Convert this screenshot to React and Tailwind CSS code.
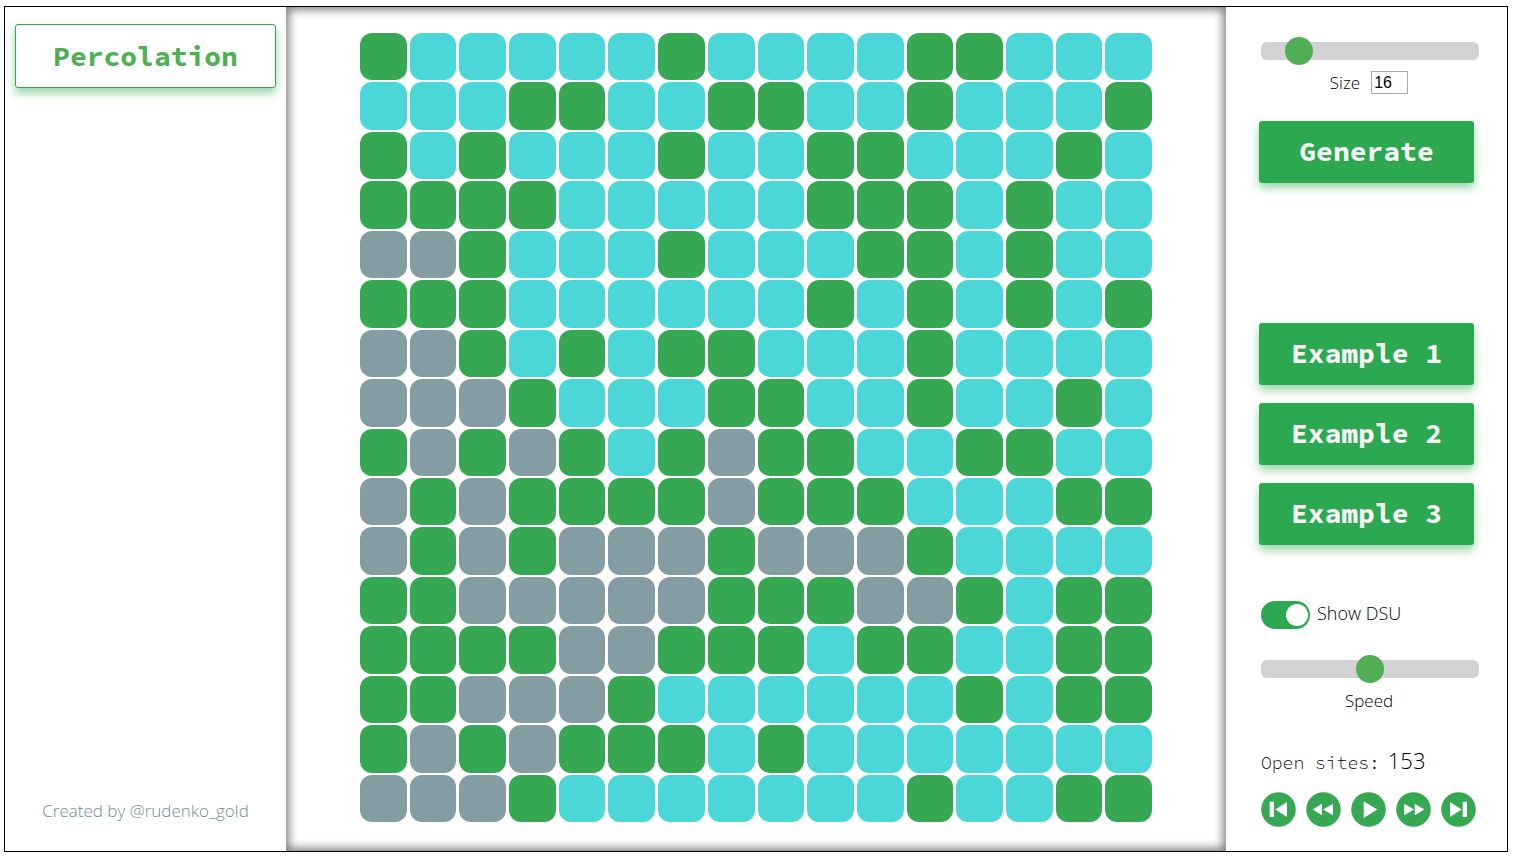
import { useState } from 'react';

const ROWS = [
  'GCCCCCGCCCCGGCCC',
  'CCCGGCCGGCCGCCCG',
  'GCGCCCGCCGGCCCGC',
  'GGGGCCCCCGGGCGCC',
  'SSGCCCGCCCGGCGCC',
  'GGGCCCCCCGCGCGCG',
  'SSGCGCGGCCCGCCCC',
  'SSSGCCCGGCCGCCGC',
  'GSGSGCGSGGCCGGCC',
  'SGSGGGGSGGGCCCGG',
  'SGSGSSSGSSSGCCCC',
  'GGSSSSSGGGSSGCGG',
  'GGGGSSGGGCGGCCGG',
  'GGSSSGCCCCCCGCGG',
  'GSGSGGGCGCCCCCCC',
  'SSSGCCCCCCCGCCGG',
];

const CELL_COLORS = {
  G: 'bg-[#36a854]',
  C: 'bg-[#4bd7d8]',
  S: 'bg-[#849da2]',
};

const MONO = "font-['Source_Code_Pro','Liberation_Mono',monospace]";

function ActionButton({ children }) {
  return (
    <button
      type="button"
      className={`${MONO} block h-[62px] w-[215px] cursor-pointer rounded-[3px] bg-[#2ca950] pb-0.5 text-[28px] leading-none font-bold text-[#f5f5f5] shadow-[0_5px_10px_rgba(44,169,80,0.5)]`}
    >
      {children}
    </button>
  );
}

function Slider({ id, ...props }) {
  return (
    <input
      id={id}
      type="range"
      className="block h-[18px] w-[218px] cursor-pointer appearance-none rounded-[6px] bg-[#d2d2d2] [&::-webkit-slider-thumb]:h-7 [&::-webkit-slider-thumb]:w-7 [&::-webkit-slider-thumb]:appearance-none [&::-webkit-slider-thumb]:rounded-full [&::-webkit-slider-thumb]:bg-[#50ae55]"
      {...props}
    />
  );
}

const PLAYER = [
  { label: 'To start', d: 'M8.7 9.7H13V25H8.7ZM14.3 17.5L26 10V25Z' },
  { label: 'Step back', d: 'M6.7 17.5L16 11.8V23.2ZM17 17.5L27 11.8V23.2Z' },
  { label: 'Play', d: 'M12.7 9.3L26.3 17.5L12.7 26Z' },
  { label: 'Step forward', d: 'M8.2 11.8L18 17.5L8.2 23.2ZM18.8 11.8L28.3 17.5L18.8 23.2Z' },
  { label: 'To end', d: 'M9 10L20.7 17.5L9 25ZM21.7 9.7H26V25H21.7Z' },
];

export default function App() {
  const [size, setSize] = useState(16);
  const [speed, setSpeed] = useState(50);
  const [showDsu, setShowDsu] = useState(true);

  return (
    <div className="flex min-h-screen bg-white pt-1.5 pr-1.5 pb-2 pl-1 font-['Open_Sans',sans-serif] font-[350] text-black">
      <div className="flex flex-1 border border-black">
        <aside className="flex w-[281px] shrink-0 flex-col justify-between px-2.5 pt-[17px] pb-7">
          <button
            type="button"
            className={`${MONO} h-16 cursor-pointer rounded-[3px] border border-[#2ca950] bg-white text-[28px] leading-none font-bold text-[#50ae55] shadow-[0_5px_10px_rgba(44,169,80,0.5)]`}
          >
            Percolation
          </button>
          <p className="text-center text-[17px] leading-6 text-[#738d92]">Created by @rudenko_gold</p>
        </aside>

        <main className="flex flex-1 justify-center pt-[26px] pb-7 shadow-[inset_0_0_10px_3px_#808080]">
          <div className="grid h-[789px] w-[792px] grid-cols-16 grid-rows-16 gap-x-[3px] gap-y-[2px]">
            {ROWS.flatMap((row, y) =>
              [...row].map((cell, x) => (
                <div key={`${y}-${x}`} className={`rounded-[12px] ${CELL_COLORS[cell]}`} />
              )),
            )}
          </div>
        </main>

        <aside className="flex w-[281px] shrink-0 flex-col px-[33px] pt-[35px]">
          <div className="-mr-[5px] flex w-[218px] flex-col items-center gap-[11px] self-end">
            <Slider
              id="size-range"
              aria-label="Size"
              min="0"
              max="128"
              value={size}
              onChange={(e) => setSize(Number(e.target.value))}
            />
            <div className="flex h-[23px] items-center gap-[11px] pr-0.5">
              <label htmlFor="size-value" className="text-[17px] leading-6">
                Size
              </label>
              <input
                id="size-value"
                type="text"
                value={size}
                onChange={(e) => setSize(Number(e.target.value) || 0)}
                className="h-[23px] w-[37px] border border-[#a9a9a9] bg-white px-0.5 font-['Liberation_Sans',sans-serif] text-[16px] leading-none"
              />
            </div>
          </div>

          <div className="mt-[27px]">
            <ActionButton>Generate</ActionButton>
          </div>

          <div className="mt-[140px] flex flex-col gap-[18px]">
            <ActionButton>Example 1</ActionButton>
            <ActionButton>Example 2</ActionButton>
            <ActionButton>Example 3</ActionButton>
          </div>

          <label className="mt-14 ml-0.5 flex cursor-pointer items-center gap-[7px]">
            <input
              type="checkbox"
              role="switch"
              checked={showDsu}
              onChange={(e) => setShowDsu(e.target.checked)}
              className="h-7 w-[49px] cursor-pointer appearance-none rounded-full bg-[#cccccc] p-[3px] before:block before:h-[22px] before:w-[22px] before:rounded-full before:bg-white before:content-[''] checked:bg-[#2ca950] checked:before:ml-[22px]"
            />
            <span className="pb-1 text-[18px] leading-6">Show DSU</span>
          </label>

          <div className="mt-[31px] -mr-[5px] flex w-[218px] flex-col items-center gap-[11px] self-end">
            <Slider
              id="speed-range"
              min="0"
              max="100"
              value={speed}
              onChange={(e) => setSpeed(Number(e.target.value))}
            />
            <label htmlFor="speed-range" className="pr-0.5 text-[17px] leading-6">
              Speed
            </label>
          </div>

          <p className="mt-[31px] ml-0.5 flex items-baseline gap-2 leading-8">
            <span className={`${MONO} text-[18px]`}>Open sites:</span>
            <span className="text-[22px]">153</span>
          </p>

          <div className="mt-[13px] -mr-[5px] ml-0.5 flex gap-2.5">
            {PLAYER.map(({ label, d }) => (
              <button key={label} type="button" aria-label={label} className="shrink-0 cursor-pointer rounded-full">
                <svg viewBox="0 0 35 35" className="block h-[35px] w-[35px]">
                  <circle cx="17.5" cy="17.5" r="17.3" fill="#36a854" />
                  <path d={d} fill="white" />
                </svg>
              </button>
            ))}
          </div>
        </aside>
      </div>
    </div>
  );
}
